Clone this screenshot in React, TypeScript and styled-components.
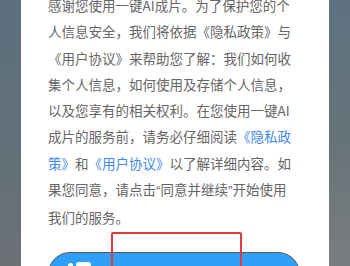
import React from "react";
import styled, { createGlobalStyle } from "styled-components";

const GlobalStyle = createGlobalStyle`
  html, body {
    margin: 0;
    padding: 0;
    width: 350px;
    height: 266px;
    overflow: hidden;
    background: #6a7078;
  }
  * { box-sizing: border-box; }
`;

const Screen = styled.div`
  display: flex;
  width: 350px;
  height: 266px;
  overflow: hidden;
  font-family: "Noto Sans CJK SC", "Noto Sans", sans-serif;
`;

const Backdrop = styled.div<{ $side: "left" | "right" }>`
  width: 21px;
  flex: none;
  background: ${(p) =>
    p.$side === "left"
      ? "linear-gradient(180deg, #5b6f7d 0%, #627179 55%, #6b7075 100%)"
      : "linear-gradient(180deg, #5d7281 0%, #677479 55%, #7a7d80 100%)"};
`;

const Card = styled.div`
  flex: 1;
  background: #ffffff;
  padding: 0 29px 0 27px;
  display: flex;
  flex-direction: column;
`;

const Body = styled.div`
  margin-top: -8px;
  font-size: 13.5px;
  line-height: 26.3px;
  color: #666666;
`;

const Line = styled.span`
  display: block;
  white-space: nowrap;
`;

const Link = styled.span`
  color: #3f8ae6;
`;

const Quote = styled.span`
  font-family: "Liberation Sans", sans-serif;
`;

const ButtonArea = styled.div`
  position: relative;
  margin-top: 21px;
`;

const AgreeButton = styled.button`
  position: relative;
  width: 100%;
  height: 44px;
  border-radius: 22px;
  border: 1px solid #555a5e;
  background: #2f9ffa;
  color: #ffffff;
  font-family: "Noto Sans CJK SC", sans-serif;
  font-size: 16px;
  padding: 0;
`;

const GlossDot = styled.span`
  position: absolute;
  left: 19px;
  top: 10px;
  width: 5px;
  height: 5px;
  border-radius: 50%;
  background: #ffffff;
`;

const GlossBar = styled.span`
  position: absolute;
  left: 27px;
  top: 9px;
  width: 15px;
  height: 6px;
  border-radius: 3px;
  background: #ffffff;
`;

const Annotation = styled.div`
  position: absolute;
  left: 63px;
  top: -20px;
  width: 131px;
  height: 70px;
  border: 2px solid #e53a3a;
  border-radius: 2px;
  pointer-events: none;
`;

export default function App() {
  return (
    <>
      <GlobalStyle />
      <Screen>
        <Backdrop $side="left" />
        <Card>
          <Body>
            <Line>感谢您使用一键AI成片。为了保护您的个</Line>
            <Line>人信息安全，我们将依据《隐私政策》与</Line>
            <Line>《用户协议》来帮助您了解：我们如何收</Line>
            <Line>集个人信息，如何使用及存储个人信息，</Line>
            <Line>以及您享有的相关权利。在您使用一键AI</Line>
            <Line>
              成片的服务前，请务必仔细阅读<Link>《隐私政</Link>
            </Line>
            <Line>
              <Link>策》</Link>和<Link>《用户协议》</Link>以了解详细内容。如
            </Line>
            <Line>
              果您同意，请点击<Quote>“</Quote>同意并继续<Quote>”</Quote>开始使用
            </Line>
            <Line>我们的服务。</Line>
          </Body>
          <ButtonArea>
            <AgreeButton>
              <GlossDot />
              <GlossBar />
              同意并继续
            </AgreeButton>
            <Annotation />
          </ButtonArea>
        </Card>
        <Backdrop $side="right" />
      </Screen>
    </>
  );
}
